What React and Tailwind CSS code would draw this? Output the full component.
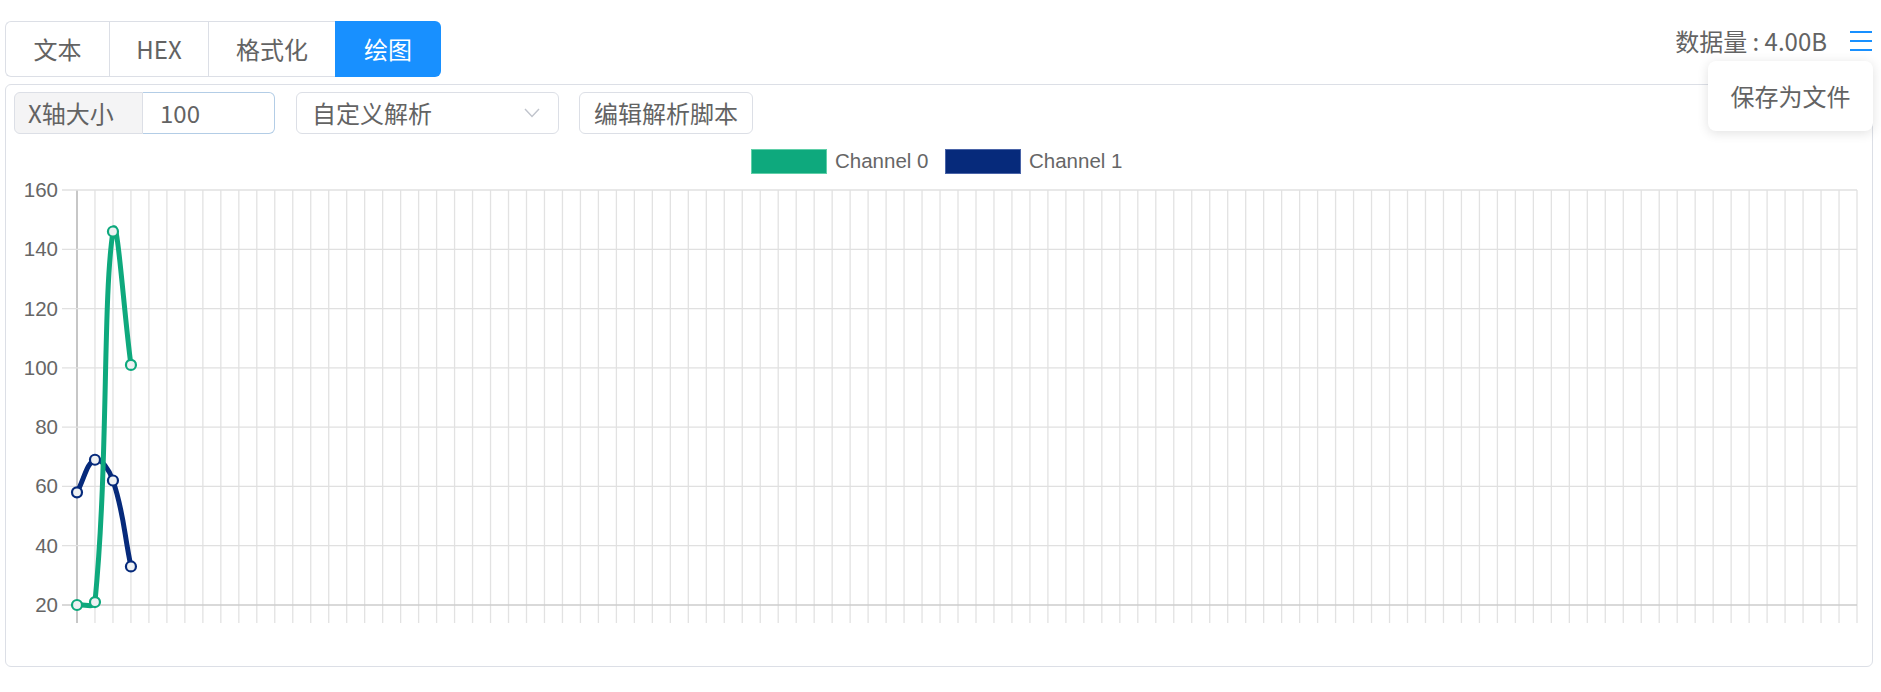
import React from "react";

const TABS = [
  { label: "文本", w: "w-[104px]" },
  { label: "HEX", w: "w-[99px]" },
  { label: "格式化", w: "w-[127px]" },
  { label: "绘图", w: "w-[106px]", active: true },
];

const SERIES = [
  { name: "Channel 0", color: "#0ea97d", data: [20, 21, 146, 101] },
  { name: "Channel 1", color: "#062a7b", data: [58, 69, 62, 33] },
];

// chart geometry (svg coords)
const LEFT = 71;
const RIGHT = 1851;
const TOP = 56;
const BOTTOM = 471;
const X_COUNT = 100;
const STEP = (RIGHT - LEFT) / (X_COUNT - 1);

const xAt = (i) => LEFT + i * STEP;
const yAt = (v) => BOTTOM - ((v - 20) / 140) * (BOTTOM - TOP);

// chart.js style bezier, tension 0.4
function splinePath(pts, t = 0.4) {
  const cps = pts.map((p, i) => {
    const prev = pts[i - 1] || p;
    const next = pts[i + 1] || p;
    const d01 = Math.hypot(p.x - prev.x, p.y - prev.y);
    const d12 = Math.hypot(next.x - p.x, next.y - p.y);
    let s01 = d01 / (d01 + d12);
    let s12 = d12 / (d01 + d12);
    if (isNaN(s01)) s01 = 0;
    if (isNaN(s12)) s12 = 0;
    const fa = t * s01;
    const fb = t * s12;
    return {
      prev: { x: p.x - fa * (next.x - prev.x), y: p.y - fa * (next.y - prev.y) },
      next: { x: p.x + fb * (next.x - prev.x), y: p.y + fb * (next.y - prev.y) },
    };
  });
  let d = `M${pts[0].x},${pts[0].y}`;
  for (let i = 1; i < pts.length; i++) {
    const a = cps[i - 1].next;
    const b = cps[i].prev;
    d += ` C${a.x},${a.y} ${b.x},${b.y} ${pts[i].x},${pts[i].y}`;
  }
  return d;
}

const Chart = () => {
  const yTicks = [20, 40, 60, 80, 100, 120, 140, 160];
  return (
    <svg width="1866" height="532" className="block">
      {/* legend */}
      <g fontFamily="'Liberation Sans', Arial, sans-serif" fontSize="20.5" fill="#666">
        <rect x="745.5" y="15.5" width="75" height="24" fill="#0ea97d" stroke="#5fcfa8" />
        <text x="829" y="34">Channel 0</text>
        <rect x="939.5" y="15.5" width="75" height="24" fill="#062a7b" stroke="#4a64a8" />
        <text x="1023" y="34">Channel 1</text>
      </g>

      {/* vertical grid */}
      {Array.from({ length: X_COUNT }, (_, i) => (
        <line
          key={`v${i}`}
          x1={xAt(i)}
          x2={xAt(i)}
          y1={TOP}
          y2={489}
          stroke={i === 0 ? "#b4b4b4" : "#e2e2e2"}
          strokeWidth={i === 0 ? 1.5 : 1.3}
        />
      ))}

      {/* horizontal grid + labels */}
      {yTicks.map((v) => (
        <g key={`h${v}`}>
          <line
            x1={56}
            x2={RIGHT}
            y1={yAt(v)}
            y2={yAt(v)}
            stroke={v === 20 ? "#cdcdcd" : "#e0e0e0"}
            strokeWidth="1.3"
          />
          <text
            x="52"
            y={yAt(v) + 7}
            textAnchor="end"
            fontFamily="'Liberation Sans', Arial, sans-serif"
            fontSize="20.5"
            fill="#666"
          >
            {v}
          </text>
        </g>
      ))}

      {/* data, first dataset on top */}
      {[...SERIES].reverse().map((s) => {
        const pts = s.data.map((v, i) => ({ x: xAt(i), y: yAt(v) }));
        return (
          <g key={s.name}>
            <path d={splinePath(pts)} fill="none" stroke={s.color} strokeWidth="5" strokeLinecap="round" />
            {pts.map((p, i) => (
              <circle key={i} cx={p.x} cy={p.y} r="5" fill="#eef1f3" stroke={s.color} strokeWidth="2.2" />
            ))}
          </g>
        );
      })}
    </svg>
  );
};

const App = () => {
  return (
    <div className="relative w-[1881px] h-[692px] overflow-hidden bg-white text-[#636363] font-['Noto_Sans_CJK_SC',sans-serif]">
      {/* top row */}
      <div className="flex items-start justify-between pl-[5px] pr-[9px] pt-[21px]">
        <div className="flex h-[56px]">
          {TABS.map((t, i) => (
            <div
              key={t.label}
              className={`${t.w} flex items-center justify-center text-[24px] leading-none ${
                t.active
                  ? "bg-[#1890ff] text-white rounded-r-[6px]"
                  : `border-y border-l border-[#dcdfe6] ${i === 0 ? "rounded-l-[6px]" : ""}`
              }`}
            >
              {t.label}
            </div>
          ))}
        </div>
        <div className="flex items-center h-[24px] mt-[8px]">
          <span className="text-[24px] leading-none">数据量 : 4.00B</span>
          <svg width="22" height="21" viewBox="0 0 22 21" className="ml-[23px] -mt-[2px]">
            <rect x="0" y="1" width="22" height="2" fill="#1890ff" />
            <rect x="0" y="10" width="22" height="2" fill="#1890ff" />
            <rect x="0" y="19" width="22" height="2" fill="#1890ff" />
          </svg>
        </div>
      </div>

      {/* panel */}
      <div className="ml-[5px] mt-[7px] w-[1868px] h-[583px] border border-[#dcdfe6] rounded-[6px]">
        <div className="flex items-center pl-[8px] pt-[7px] h-[49px]">
          <div className="flex h-[42px]">
            <div className="w-[129px] flex items-center pl-[13px] bg-[#f4f4f5] border border-[#dcdfe6] rounded-l-[6px] text-[24px] leading-none">
              X轴大小
            </div>
            <div className="w-[132px] flex items-center pl-[17px] border border-l-0 border-[#b3cde6] rounded-r-[6px] text-[24px] leading-none">
              100
            </div>
          </div>
          <div className="ml-[21px] w-[263px] h-[42px] flex items-center justify-between pl-[15px] pr-[18px] border border-[#dcdfe6] rounded-[6px] text-[24px] leading-none">
            <span>自定义解析</span>
            <svg width="16" height="10" viewBox="0 0 16 10">
              <path d="M1 1 L8 8.5 L15 1" fill="none" stroke="#c0c4cc" strokeWidth="1.4" />
            </svg>
          </div>
          <div className="ml-[20px] w-[174px] h-[42px] flex items-center justify-center border border-[#dcdfe6] rounded-[6px] text-[24px] leading-none">
            编辑解析脚本
          </div>
        </div>
        <Chart />
      </div>

      {/* dropdown menu */}
      <div className="absolute left-[1708px] top-[61px] w-[165px] h-[70px] flex items-center justify-center bg-white rounded-[8px] shadow-[0_2px_12px_rgba(0,0,0,0.12)] text-[24px] leading-none">
        保存为文件
      </div>
    </div>
  );
};

export default App;
